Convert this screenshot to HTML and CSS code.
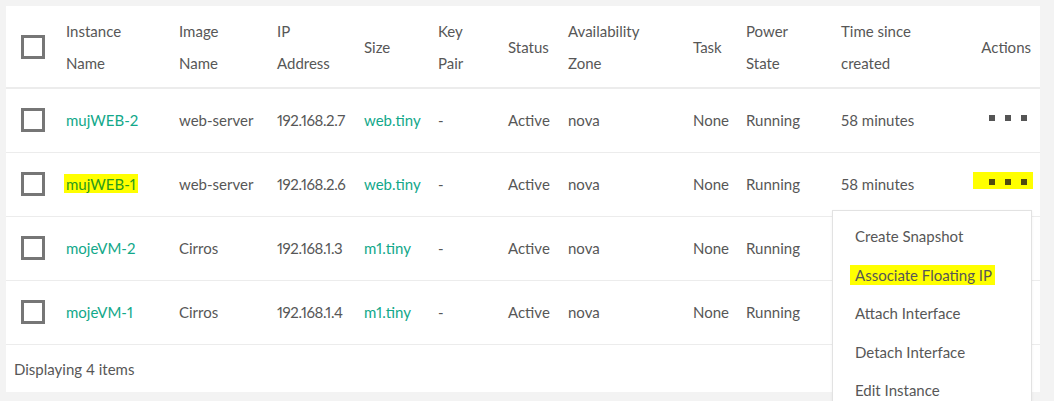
FILE: index.html
```html
<!DOCTYPE html>
<html>
<head>
<meta charset="utf-8">
<link rel="stylesheet" href="styles.css">
</head>
<body>
<div class="page">
  <div class="panel">
    <table class="grid">
      <colgroup>
        <col class="c1"><col class="c2"><col class="c3"><col class="c4"><col class="c5"><col class="c6">
        <col class="c7"><col class="c8"><col class="c9"><col class="c10"><col class="c11"><col class="c12">
      </colgroup>
      <thead>
        <tr>
          <th class="chk"><span class="box"></span></th>
          <th>Instance<br>Name</th>
          <th>Image<br>Name</th>
          <th>IP<br>Address</th>
          <th>Size</th>
          <th>Key<br>Pair</th>
          <th>Status</th>
          <th>Availability<br>Zone</th>
          <th>Task</th>
          <th>Power<br>State</th>
          <th>Time since<br>created</th>
          <th class="act">Actions</th>
        </tr>
      </thead>
      <tbody>
        <tr>
          <td class="chk"><span class="box"></span></td>
          <td><span class="link">mujWEB-2</span></td>
          <td>web-server</td>
          <td class="ip">192.168.2.7</td>
          <td><span class="link">web.tiny</span></td>
          <td>-</td>
          <td>Active</td>
          <td>nova</td>
          <td>None</td>
          <td>Running</td>
          <td>58 minutes</td>
          <td class="actd"><span class="dots"><i></i><i></i><i></i></span></td>
        </tr>
        <tr>
          <td class="chk"><span class="box"></span></td>
          <td><span class="link mark">mujWEB-1</span></td>
          <td>web-server</td>
          <td class="ip">192.168.2.6</td>
          <td><span class="link">web.tiny</span></td>
          <td>-</td>
          <td>Active</td>
          <td>nova</td>
          <td>None</td>
          <td>Running</td>
          <td>58 minutes</td>
          <td class="actd"><span class="dots hl"><i></i><i></i><i></i></span></td>
        </tr>
        <tr>
          <td class="chk"><span class="box"></span></td>
          <td><span class="link">mojeVM-2</span></td>
          <td>Cirros</td>
          <td class="ip">192.168.1.3</td>
          <td><span class="link">m1.tiny</span></td>
          <td>-</td>
          <td>Active</td>
          <td>nova</td>
          <td>None</td>
          <td>Running</td>
          <td></td>
          <td class="actd"></td>
        </tr>
        <tr>
          <td class="chk"><span class="box"></span></td>
          <td><span class="link">mojeVM-1</span></td>
          <td>Cirros</td>
          <td class="ip">192.168.1.4</td>
          <td><span class="link">m1.tiny</span></td>
          <td>-</td>
          <td>Active</td>
          <td>nova</td>
          <td>None</td>
          <td>Running</td>
          <td></td>
          <td class="actd"></td>
        </tr>
      </tbody>
    </table>
    <div class="footer">Displaying 4 items</div>
  </div>
  <ul class="menu">
    <li>Create Snapshot</li>
    <li><span class="mhl">Associate Floating IP</span></li>
    <li>Attach Interface</li>
    <li>Detach Interface</li>
    <li>Edit Instance</li>
  </ul>
</div>
</body>
</html>
```

FILE: styles.css
```css
html, body {
  margin: 0;
  padding: 0;
  background: #f3f3f3;
  overflow: hidden;
}
body {
  font-family: Lato, "Open Sans", sans-serif;
  font-size: 15px;
  color: #575757;
  font-variant-numeric: proportional-nums;
}
.page {
  position: relative;
  width: 1054px;
  height: 401px;
  padding-top: 6px;
  box-sizing: border-box;
}
.panel {
  margin-left: 6px;
  width: 1034px;
  height: 386px;
  background: #fff;
}
.grid {
  width: 1034px;
  border-collapse: collapse;
  table-layout: fixed;
}
.c1 { width: 60px; }
.c2 { width: 113px; }
.c3 { width: 98px; }
.c4 { width: 87px; }
.c5 { width: 74px; }
.c6 { width: 70px; }
.c7 { width: 60px; }
.c8 { width: 125px; }
.c9 { width: 53px; }
.c10 { width: 95px; }
.c11 { width: 119px; }
.c12 { width: 80px; }
th, td {
  padding: 0;
  text-align: left;
  vertical-align: middle;
  white-space: nowrap;
  font-weight: normal;
}
thead tr {
  height: 82px;
  border-bottom: 2px solid #ececec;
}
th {
  line-height: 32px;
}
tbody tr {
  height: 64px;
  border-bottom: 1px solid #ececec;
}
td {
  line-height: 20px;
}
.ip {
  letter-spacing: -0.4px;
}
.chk {
  padding-left: 15px;
}
.box {
  display: block;
  width: 18px;
  height: 18px;
  border: 3px solid #767676;
}
th .box { margin-top: 1px; }
.act {
  text-align: right;
  padding-right: 9px;
}
.actd {
  text-align: right;
  padding-right: 7px;
}
.link {
  color: #12a88a;
}
.mark {
  background: #ffff00;
  color: #2a9a1c;
  padding: 1px 2px 0 2px;
  margin-left: -2px;
}
.dots {
  display: inline-flex;
  gap: 10px;
  padding: 7px 6px 4px 16px;
  margin-bottom: 8px;
  vertical-align: middle;
}
.dots i {
  display: block;
  width: 6px;
  height: 6px;
  background: #555;
}
.dots.hl {
  background: #ffff00;
}
.dots.hl i {
  background: #4f4a10;
}
.footer {
  padding-left: 8px;
  height: 48px;
  line-height: 48px;
  font-size: 15px;
}
.menu {
  position: absolute;
  left: 832px;
  top: 210px;
  width: 200px;
  height: 200px;
  margin: 0;
  padding: 15px 0 0 0;
  list-style: none;
  background: #fff;
  border: 1px solid #e2e2e2;
  box-sizing: border-box;
  box-shadow: 0 1px 3px rgba(0,0,0,0.06);
}
.menu li {
  padding-left: 22px;
  height: 38.5px;
  line-height: 20px;
}
.mhl {
  background: #ffff00;
  margin-left: -5px;
  padding: 1px 3px 1px 5px;
}
```
